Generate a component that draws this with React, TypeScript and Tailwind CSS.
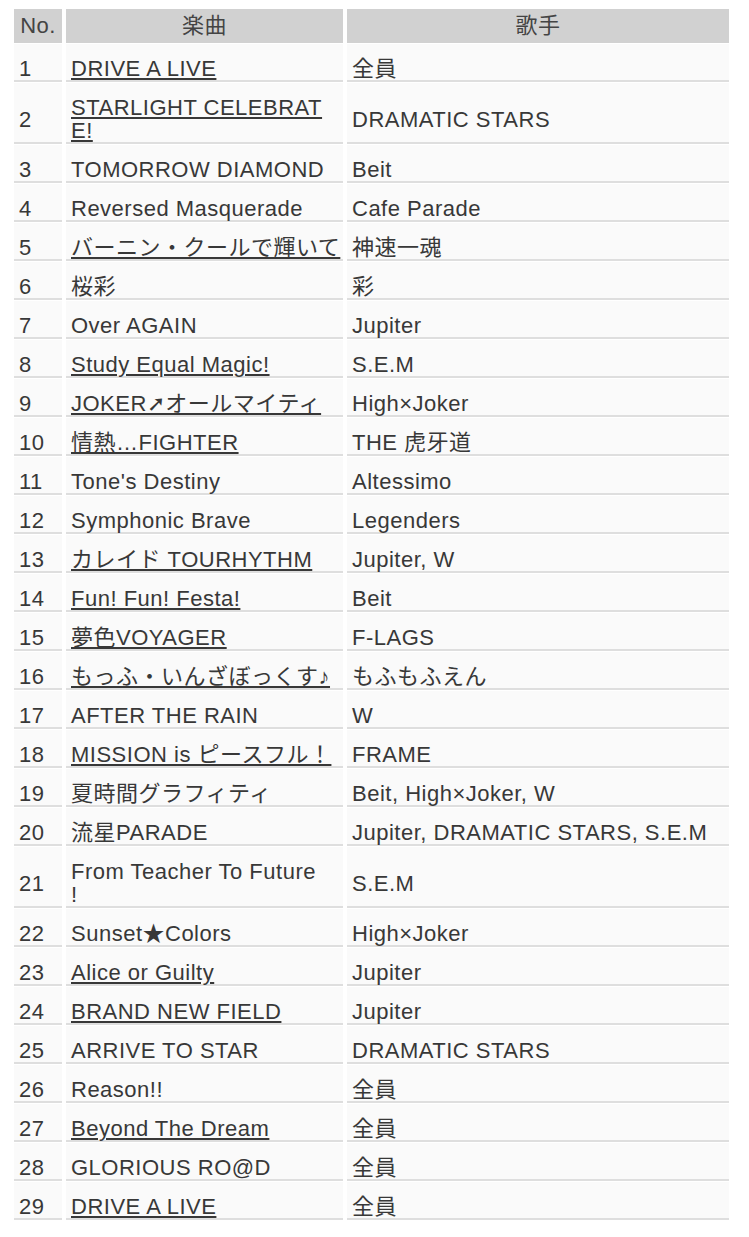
import React from 'react'

type Song = {
  no: number
  title: string[]
  artist: string
  link?: boolean
}

const songs: Song[] = [
  { no: 1, title: ['DRIVE A LIVE'], artist: '全員', link: true },
  { no: 2, title: ['STARLIGHT CELEBRAT', 'E!'], artist: 'DRAMATIC STARS', link: true },
  { no: 3, title: ['TOMORROW DIAMOND'], artist: 'Beit' },
  { no: 4, title: ['Reversed Masquerade'], artist: 'Cafe Parade' },
  { no: 5, title: ['バーニン・クールで輝いて'], artist: '神速一魂', link: true },
  { no: 6, title: ['桜彩'], artist: '彩' },
  { no: 7, title: ['Over AGAIN'], artist: 'Jupiter' },
  { no: 8, title: ['Study Equal Magic!'], artist: 'S.E.M', link: true },
  { no: 9, title: ['JOKER➚オールマイティ'], artist: 'High×Joker', link: true },
  { no: 10, title: ['情熱…FIGHTER'], artist: 'THE 虎牙道', link: true },
  { no: 11, title: ["Tone's Destiny"], artist: 'Altessimo' },
  { no: 12, title: ['Symphonic Brave'], artist: 'Legenders' },
  { no: 13, title: ['カレイド TOURHYTHM'], artist: 'Jupiter, W', link: true },
  { no: 14, title: ['Fun! Fun! Festa!'], artist: 'Beit', link: true },
  { no: 15, title: ['夢色VOYAGER'], artist: 'F-LAGS', link: true },
  { no: 16, title: ['もっふ・いんざぼっくす♪'], artist: 'もふもふえん', link: true },
  { no: 17, title: ['AFTER THE RAIN'], artist: 'W' },
  { no: 18, title: ['MISSION is ピースフル！'], artist: 'FRAME', link: true },
  { no: 19, title: ['夏時間グラフィティ'], artist: 'Beit, High×Joker, W' },
  { no: 20, title: ['流星PARADE'], artist: 'Jupiter, DRAMATIC STARS, S.E.M' },
  { no: 21, title: ['From Teacher To Future', '!'], artist: 'S.E.M' },
  { no: 22, title: ['Sunset★Colors'], artist: 'High×Joker' },
  { no: 23, title: ['Alice or Guilty'], artist: 'Jupiter', link: true },
  { no: 24, title: ['BRAND NEW FIELD'], artist: 'Jupiter', link: true },
  { no: 25, title: ['ARRIVE TO STAR'], artist: 'DRAMATIC STARS' },
  { no: 26, title: ['Reason!!'], artist: '全員' },
  { no: 27, title: ['Beyond The Dream'], artist: '全員', link: true },
  { no: 28, title: ['GLORIOUS RO@D'], artist: '全員' },
  { no: 29, title: ['DRIVE A LIVE'], artist: '全員', link: true },
]

const cell =
  'bg-[#fafafa] border-b-2 border-[#dedede] pt-[14px] pb-0 px-[5px] align-middle leading-[22px] whitespace-nowrap'

const head = 'h-[34px] bg-[#d1d1d1] text-center font-normal text-[#444] leading-[22px]'

export default function App() {
  return (
    <div
      className="min-h-[1237px] bg-white pl-[10px] pt-[8px] text-[22px] tracking-[0.5px] text-[#383838]"
      style={{ fontFamily: '"Liberation Sans", "Noto Sans CJK JP", sans-serif' }}
    >
      <table className="w-[723px] table-fixed border-separate border-spacing-x-[4px] border-spacing-y-[1px]">
        <colgroup>
          <col className="w-[48px]" />
          <col className="w-[277px]" />
          <col className="w-[382px]" />
        </colgroup>
        <thead>
          <tr>
            <th className={head}>No.</th>
            <th className={head}>楽曲</th>
            <th className={head}>歌手</th>
          </tr>
        </thead>
        <tbody>
          {songs.map((song) => (
            <tr key={song.no}>
              <td className={cell}>{song.no}</td>
              <td className={cell}>
                {song.title.map((line, i) => (
                  <div key={i} className={i > 0 ? 'leading-[23px]' : ''}>
                    <span className={song.link ? 'underline decoration-[1.5px] underline-offset-[2px]' : ''}>
                      {line}
                    </span>
                  </div>
                ))}
              </td>
              <td className={cell}>{song.artist}</td>
            </tr>
          ))}
        </tbody>
      </table>
    </div>
  )
}
